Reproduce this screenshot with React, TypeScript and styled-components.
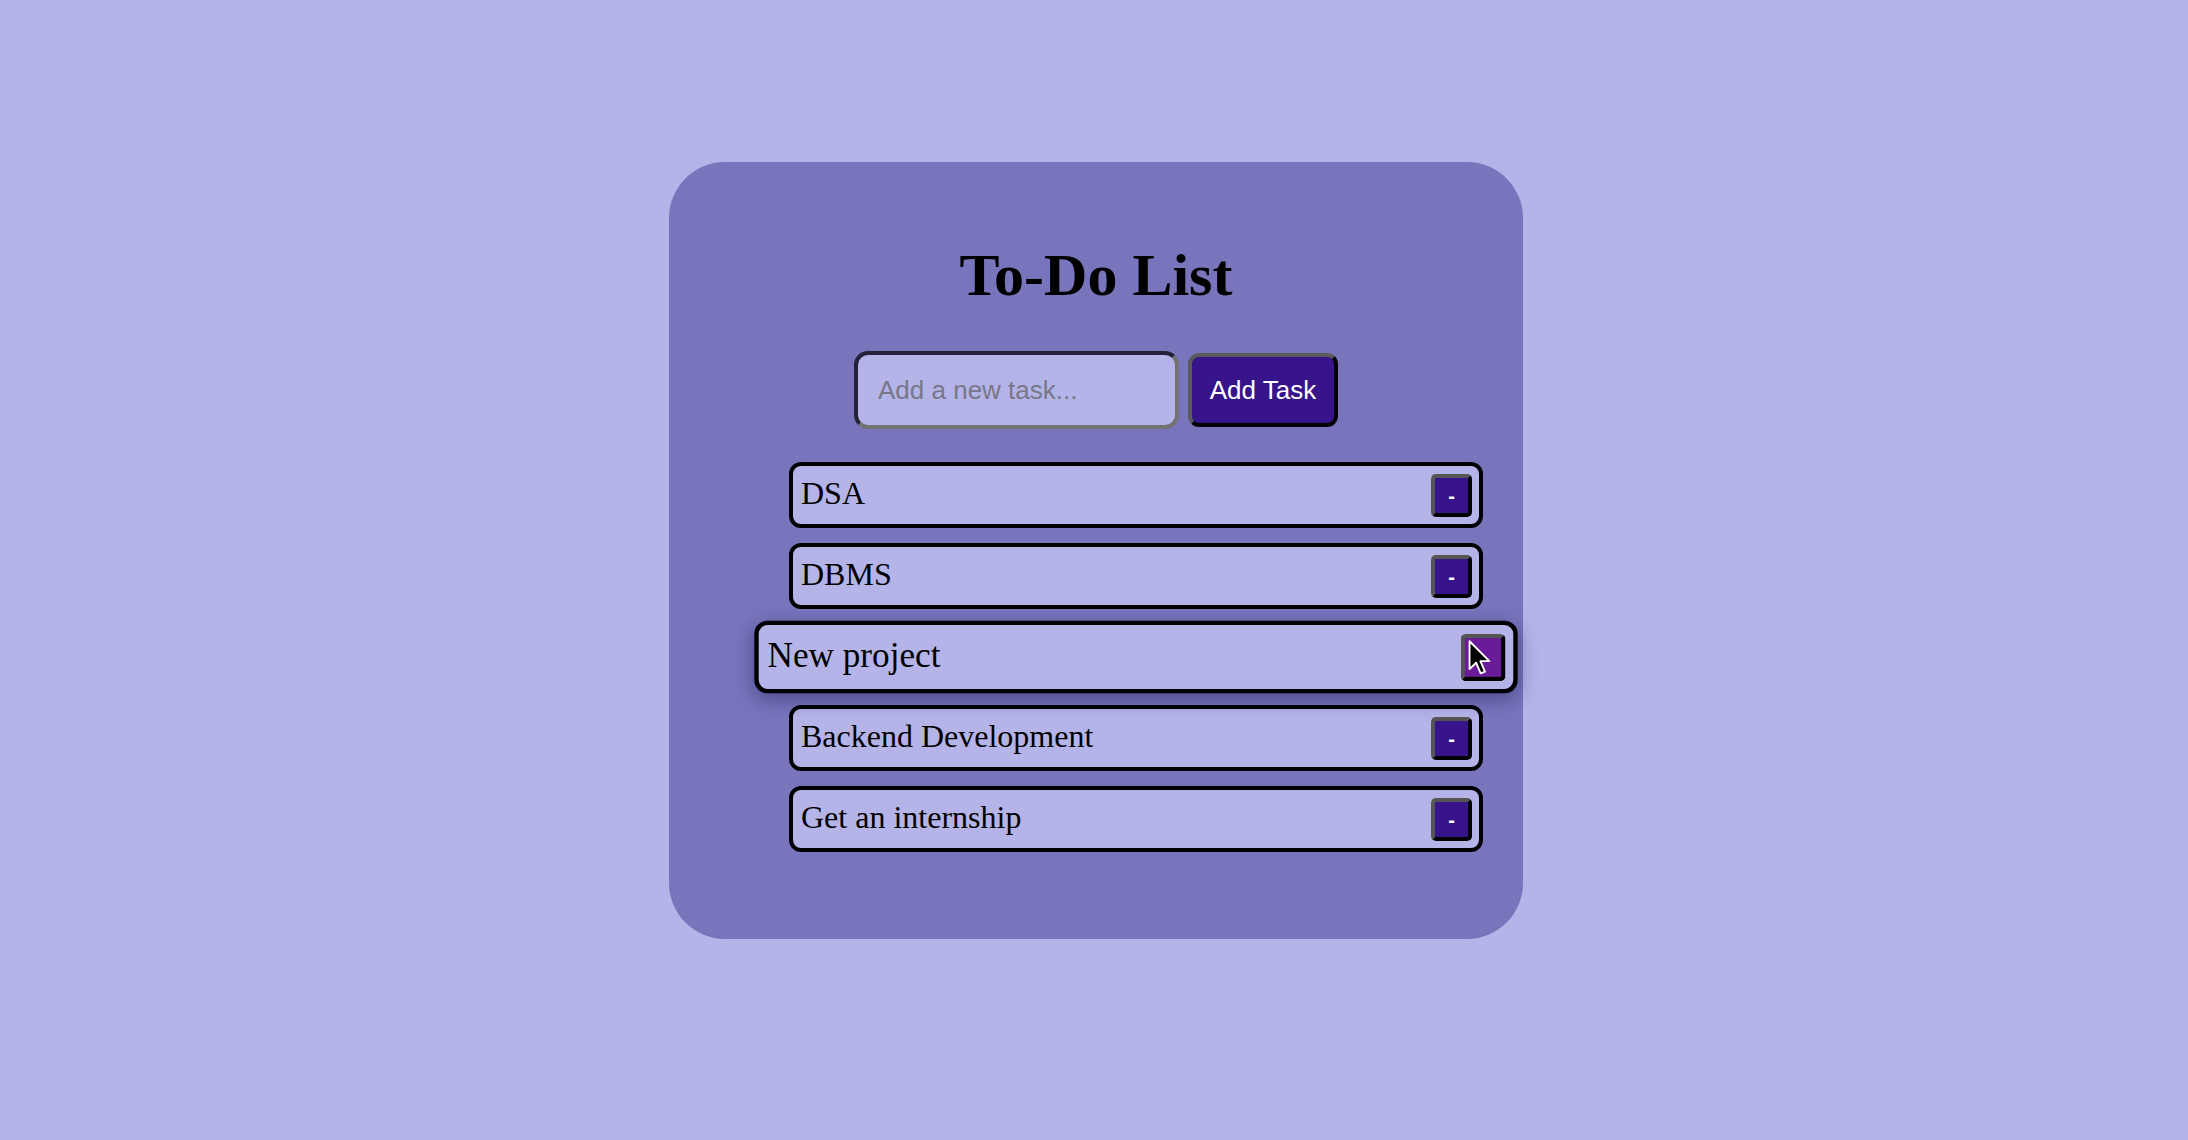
import React from "react";
import styled, { createGlobalStyle, css } from "styled-components";

const GlobalStyle = createGlobalStyle`
  html, body { margin: 0; padding: 0; }
  body {
    background: #b4b4e8;
    font-family: "Liberation Serif", "Times New Roman", serif;
  }
`;

const Page = styled.div`
  min-height: 1140px;
  box-sizing: border-box;
  display: flex;
  justify-content: center;
  align-items: flex-start;
  padding: 162px 0 0 4px;
`;

const Card = styled.main`
  width: 854px;
  box-sizing: border-box;
  padding: 81px 40px 87px;
  background: #7875bd;
  border-radius: 56px;
  display: flex;
  flex-direction: column;
  align-items: center;
`;

const Title = styled.h1`
  margin: 0;
  font-family: "Liberation Serif", "Times New Roman", serif;
  font-weight: 700;
  font-size: 60px;
  line-height: 64px;
  color: #000;
`;

const InputRow = styled.form`
  margin-top: 44px;
  display: flex;
  align-items: center;
  gap: 9px;
`;

const TaskInput = styled.input`
  width: 325px;
  height: 78px;
  box-sizing: border-box;
  padding: 0 20px;
  border: 4px solid;
  border-color: #24223a #727272 #727272 #24223a;
  border-radius: 14px;
  background: #b4b4e8;
  font-family: "Liberation Sans", Arial, sans-serif;
  font-size: 26px;
  color: #000;
  outline: none;
  &::placeholder { color: #77778a; }
`;

const AddButton = styled.button`
  width: 150px;
  height: 74px;
  box-sizing: border-box;
  padding: 0;
  border: 4px solid;
  border-color: #5a5a5a #000 #000 #5a5a5a;
  border-radius: 11px;
  background: #37148a;
  color: #fff;
  font-family: "Liberation Sans", Arial, sans-serif;
  font-size: 26px;
  cursor: pointer;
`;

const TaskList = styled.ul`
  align-self: stretch;
  list-style: none;
  margin: 33px 0 0;
  padding: 0 0 0 80px;
  display: flex;
  flex-direction: column;
  gap: 15px;
`;

const TaskItem = styled.li<{ $hovered?: boolean }>`
  position: relative;
  height: 66px;
  box-sizing: border-box;
  display: flex;
  align-items: center;
  justify-content: space-between;
  padding: 0 7px 3px 8px;
  border: 4px solid #000;
  border-radius: 12px;
  background: #b4b4e8;
  font-family: "Liberation Serif", "Times New Roman", serif;
  font-size: 32px;
  color: #000;
  ${(p) =>
    p.$hovered &&
    css`
      z-index: 1;
      transform: scale(1.1);
      box-shadow: 0 5px 18px rgba(20, 15, 70, 0.45);
    `}
`;

const DeleteButton = styled.button<{ $hovered?: boolean }>`
  position: relative;
  width: 41px;
  height: 43px;
  margin-top: 3px;
  box-sizing: border-box;
  padding: 2px 0 0;
  border: 4px solid;
  border-color: #555 #000 #000 #555;
  border-radius: 5px;
  background: ${(p) => (p.$hovered ? "#6a1b9a" : "#37148a")};
  color: #fff;
  font-family: "Liberation Sans", Arial, sans-serif;
  font-weight: 700;
  font-size: 20px;
  cursor: pointer;
`;

const Cursor = styled.svg`
  position: absolute;
  left: 3px;
  top: 1px;
  width: 21px;
  height: 33px;
  overflow: visible;
`;

const tasks = ["DSA", "DBMS", "New project", "Backend Development", "Get an internship"];

export default function App() {
  return (
    <>
      <GlobalStyle />
      <Page>
        <Card>
          <Title>To-Do List</Title>
          <InputRow onSubmit={(e) => e.preventDefault()}>
            <TaskInput type="text" placeholder="Add a new task..." />
            <AddButton type="submit">Add Task</AddButton>
          </InputRow>
          <TaskList>
            {tasks.map((t, i) => {
              const hovered = i === 2;
              return (
                <TaskItem key={t} $hovered={hovered}>
                  <span>{t}</span>
                  <DeleteButton $hovered={hovered}>
                    {hovered ? "" : "-"}
                    {hovered && (
                      <Cursor viewBox="0 0 17 26">
                        <path
                          d="M1 1 L1 21.5 L5.8 16.8 L9.2 24.6 L12.3 23.3 L9 15.6 L15.6 15.6 Z"
                          fill="#000"
                          stroke="#fff"
                          strokeWidth="1.4"
                          strokeLinejoin="round"
                        />
                      </Cursor>
                    )}
                  </DeleteButton>
                </TaskItem>
              );
            })}
          </TaskList>
        </Card>
      </Page>
    </>
  );
}
